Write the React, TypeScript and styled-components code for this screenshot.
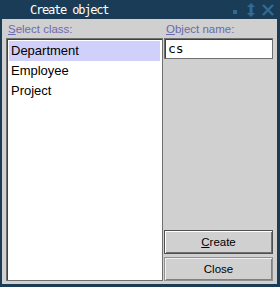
import React from "react";
import styled, { createGlobalStyle } from "styled-components";

const Global = createGlobalStyle`
  html, body { margin: 0; padding: 0; background: #1b3c57; }
  body { width: 280px; height: 287px; overflow: hidden; }
`;

const Frame = styled.div`
  width: 280px;
  height: 287px;
  box-sizing: border-box;
  background: #1b3c57;
  padding: 0 3px 3px 2px;
  display: flex;
  flex-direction: column;
`;

const TitleBar = styled.div`
  height: 19px;
  display: flex;
  align-items: center;
  padding-right: 2px;
  color: #ffffff;
  font-family: "DejaVu Sans Mono", "Liberation Mono", monospace;
  font-size: 12px;
  letter-spacing: -1.2px;
`;

const TitleText = styled.span`
  flex: 1;
  margin-left: 28px;
  padding-top: 1px;
`;

const TitleIcons = styled.div`
  display: flex;
  align-items: center;
  gap: 4px;
`;

const Body = styled.div`
  flex: 1;
  background: #d0d0d0;
  display: grid;
  grid-template-columns: 157px 1fr;
  column-gap: 1px;
  padding: 3px 4px 3px 4px;
`;

const Column = styled.div`
  display: flex;
  flex-direction: column;
  min-height: 0;
`;

const Label = styled.div`
  font-family: "Liberation Sans", Arial, sans-serif;
  font-size: 11.5px;
  color: #6a6aae;
  height: 15px;
  line-height: 15px;
  padding-left: 2px;
  u { text-decoration: underline; }
`;

const ListBox = styled.div`
  flex: 1;
  background: #ffffff;
  border: 1px solid #707070;
  box-shadow: inset 1px 1px 0 #404040;
  padding: 2px 2px;
  margin-top: 1px;
`;

const Item = styled.div<{ $selected?: boolean }>`
  height: 20px;
  line-height: 20px;
  padding-left: 2px;
  font-family: "Liberation Sans", Arial, sans-serif;
  font-size: 13px;
  color: #000;
  background: ${(p) => (p.$selected ? "#d0d0fa" : "transparent")};
`;

const Input = styled.div`
  height: 21px;
  box-sizing: border-box;
  background: #ffffff;
  border: 1px solid #707070;
  box-shadow: inset 1px 1px 0 #404040;
  margin-top: 1px;
  padding-left: 3px;
  line-height: 19px;
  font-family: "DejaVu Sans Mono", "Liberation Mono", monospace;
  font-size: 13px;
  color: #000;
`;

const Spacer = styled.div`
  flex: 1;
`;

const Button = styled.div<{ $default?: boolean }>`
  height: 24px;
  box-sizing: border-box;
  display: flex;
  align-items: center;
  justify-content: center;
  font-family: "Liberation Sans", Arial, sans-serif;
  font-size: 11.5px;
  color: #000;
  background: #d0d0d0;
  border: 1px solid ${(p) => (p.$default ? "#505050" : "#909090")};
  box-shadow: ${(p) =>
    p.$default
      ? "inset 1px 1px 0 #ffffff, inset -1px -1px 0 #707070"
      : "inset 1px 1px 0 #f0f0f0, inset -1px -1px 0 #808080"};
  margin-top: 3px;
  u { text-decoration: underline; }
`;

export default function App() {
  return (
    <>
      <Global />
      <Frame>
        <TitleBar>
          <TitleText>Create object</TitleText>
          <TitleIcons>
            <svg width="12" height="14" viewBox="0 0 12 14">
              <rect x="4" y="7" width="4" height="4" fill="#2f6b94" />
            </svg>
            <svg width="12" height="16" viewBox="0 0 12 16">
              <path d="M6 1 L10 5 L7.5 5 L7.5 11 L10 11 L6 15 L2 11 L4.5 11 L4.5 5 L2 5 Z" fill="#2f6b94" />
            </svg>
            <svg width="14" height="14" viewBox="0 0 14 14">
              <path d="M2 2 L12 12 M12 2 L2 12" stroke="#2f6b94" strokeWidth="2.4" />
            </svg>
          </TitleIcons>
        </TitleBar>
        <Body>
          <Column>
            <Label><u>S</u>elect class:</Label>
            <ListBox>
              <Item $selected>Department</Item>
              <Item>Employee</Item>
              <Item>Project</Item>
            </ListBox>
          </Column>
          <Column>
            <Label><u>O</u>bject name:</Label>
            <Input>cs</Input>
            <Spacer />
            <Button $default><span><u>C</u>reate</span></Button>
            <Button>Close</Button>
          </Column>
        </Body>
      </Frame>
    </>
  );
}
